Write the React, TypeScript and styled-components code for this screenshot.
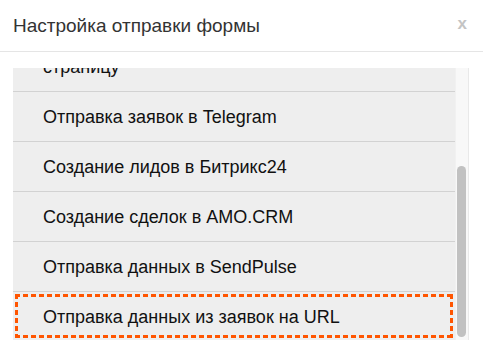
import React, { useLayoutEffect, useRef } from "react";
import styled, { createGlobalStyle } from "styled-components";

const Global = createGlobalStyle`
  html, body { margin: 0; padding: 0; background: #ffffff; }
  body { font-family: "Liberation Sans", Arial, sans-serif; }
`;

const Modal = styled.div`
  width: 483px;
  height: 362px;
  background: #ffffff;
  display: flex;
  flex-direction: column;
`;

const Header = styled.div`
  height: 52px;
  box-sizing: border-box;
  border-bottom: 1px solid #e5e5e5;
  display: flex;
  align-items: center;
  justify-content: space-between;
  padding: 1px 16px 0 13px;
`;

const Title = styled.h3`
  margin: 0;
  font-size: 19px;
  line-height: 22px;
  font-weight: normal;
  color: #333333;
`;

const Close = styled.span`
  align-self: flex-start;
  margin-top: 14px;
  font-size: 17px;
  font-weight: bold;
  color: #c4c4c4;
  line-height: 1;
`;

const Body = styled.div`
  padding: 16px 14px 21px 13px;
  display: flex;
  height: 272px;
`;

const List = styled.div`
  flex: 1;
  height: 272px;
  overflow-y: scroll;
  background: #eeeeee;
  scrollbar-width: none;
  &::-webkit-scrollbar { display: none; }
`;

const Track = styled.div`
  width: 14px;
  height: 272px;
  box-sizing: border-box;
  background: #f8f8f8;
  border-left: 1px solid #f1f1f1;
  border-right: 1px solid #e9e9e9;
  display: flex;
  flex-direction: column;
`;

const Thumb = styled.div`
  margin: 98px 0 0 1px;
  width: 9px;
  height: 171px;
  border-radius: 5px;
  background: #c1c1c1;
`;

const Row = styled.div<{ $selected?: boolean }>`
  position: relative;
  padding: 15px 30px ${(p) => (p.$selected ? "12px" : "13px")};
  font-size: 18px;
  line-height: 21px;
  color: #111111;
  border-bottom: ${(p) => (p.$selected ? "none" : "1px solid #d2d2d2")};
  ${(p) =>
    p.$selected &&
    `
    &::after {
      content: "";
      position: absolute;
      inset: 2px;
      pointer-events: none;
      background:
        repeating-linear-gradient(90deg, #ff5500 0 5px, transparent 5px 8px) top left / 100% 3px no-repeat,
        repeating-linear-gradient(90deg, #ff5500 0 5px, transparent 5px 8px) bottom left / 100% 3px no-repeat,
        repeating-linear-gradient(180deg, #ff5500 0 5px, transparent 5px 8px) top left / 3px 100% no-repeat,
        repeating-linear-gradient(180deg, #ff5500 0 5px, transparent 5px 8px) top right / 3px 100% no-repeat;
    }
  `}
`;

const items = [
  "Отправка заявок на e-mail",
  "Показ сообщения об успешной отправке",
  "Перенаправление посетителя на\nстраницу",
  "Отправка заявок в Telegram",
  "Создание лидов в Битрикс24",
  "Создание сделок в AMO.CRM",
  "Отправка данных в SendPulse",
  "Отправка данных из заявок на URL",
];

export default function App() {
  const ref = useRef<HTMLDivElement>(null);
  useLayoutEffect(() => {
    const el = ref.current;
    if (el) el.scrollTop = el.scrollHeight;
  }, []);
  return (
    <Modal>
      <Global />
      <Header>
        <Title>Настройка отправки формы</Title>
        <Close>x</Close>
      </Header>
      <Body>
        <List ref={ref}>
          {items.map((t, i) => (
            <Row key={i} $selected={i === items.length - 1}>
              {t.split("\n").map((line, j) => (
                <React.Fragment key={j}>
                  {j > 0 && <br />}
                  {line}
                </React.Fragment>
              ))}
            </Row>
          ))}
        </List>
        <Track>
          <Thumb />
        </Track>
      </Body>
    </Modal>
  );
}
